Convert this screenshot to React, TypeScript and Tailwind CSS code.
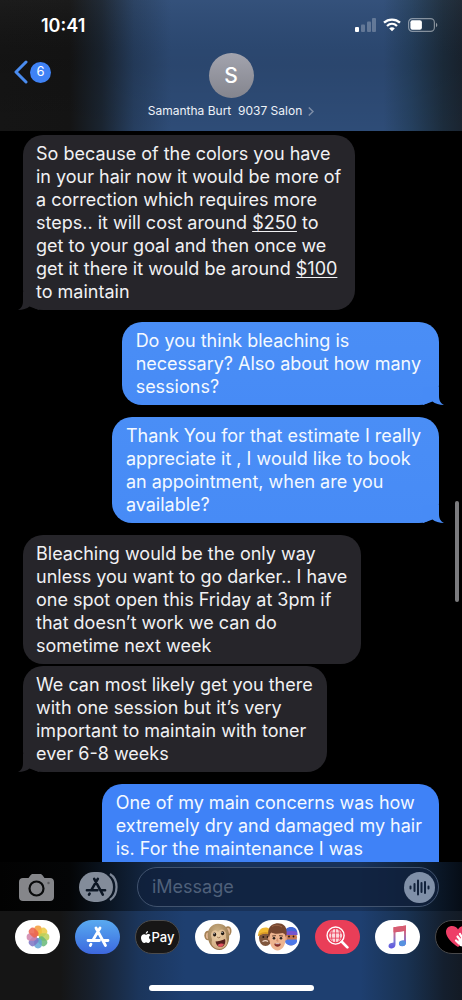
import React from "react";

function Tail({ side }: { side: "left" | "right" }) {
  return side === "left" ? (
    <svg className="absolute bottom-0 -left-[6px] h-[18px] w-[22px] text-[#26252a]" viewBox="0 0 22 18" fill="currentColor" aria-hidden="true">
      <path d="M6 0V9C6 13.5 4.5 16 1 18C5.500 18 10 16.500 12.500 14.500L22 18V0Z" />
    </svg>
  ) : (
    <svg className="absolute bottom-0 -right-[6px] h-[18px] w-[22px] text-[#478bf6]" viewBox="0 0 22 18" fill="currentColor" aria-hidden="true">
      <path d="M16 0V9C16 13.500 17.500 16 21 18C16.500 18 12 16.500 9.500 14.500L0 18V0Z" />
    </svg>
  );
}

function Received({ children, tail = false }: { children: React.ReactNode; tail?: boolean }) {
  return (
    <li className="relative self-start rounded-[20px] bg-[#26252a] py-[7px] pr-[14px] pl-[13px] text-[#f1f1f3]">
      {tail && <Tail side="left" />}
      <p className="relative whitespace-nowrap">{children}</p>
    </li>
  );
}

function Sent({ children }: { children: React.ReactNode }) {
  return (
    <li className="relative self-end rounded-[20px] bg-linear-to-b from-[#4a8ef6] to-[#478bf6] py-[7px] pr-[18px] pl-[14px] text-[#f4f9ff]">
      <Tail side="right" />
      <p className="relative whitespace-nowrap">{children}</p>
    </li>
  );
}

function StoreGlyph({ className }: { className: string }) {
  return (
    <svg className={className} viewBox="0 0 24 22" fill="none" stroke="currentColor" strokeWidth="2.8" strokeLinecap="round" aria-hidden="true">
      <path d="M10 2L19.500 19.500M14 2L7.300 13.500M2 14.500H13.500M18 14.500H22M5 18.200L4.300 19.500" />
    </svg>
  );
}

const petals = [
  { a: 0, c: "#f59b38" },
  { a: 45, c: "#edc83f" },
  { a: 90, c: "#b8cf58" },
  { a: 135, c: "#66b978" },
  { a: 180, c: "#62a6d5" },
  { a: 225, c: "#7c74c4" },
  { a: 270, c: "#cf83aa" },
  { a: 315, c: "#eb614b" },
];

function PhotosIcon() {
  return (
    <svg className="h-6 w-6" viewBox="0 0 24 24" aria-hidden="true">
      {petals.map((p) => (
        <rect key={p.a} x="8.200" y="0.600" width="7.600" height="10.400" rx="3.800" fill={p.c} fillOpacity="0.850" transform={`rotate(${p.a} 12 12)`} />
      ))}
      <circle cx="12" cy="12" r="1.100" fill="#fff" />
    </svg>
  );
}

function AppleMark() {
  return (
    <svg className="h-3 w-[10px]" viewBox="0 0 20 24" fill="#fff" aria-hidden="true">
      <path d="M14 0C14.200 3 12 5.500 9.500 5.500C9.200 3 11.500 .400 14 0ZM19 8.300C14.800 10.500 15.500 15.800 19.800 17.500C18.500 21 16.600 23.800 14.600 23.800C12.900 23.800 12.300 22.800 10.300 22.800C8.300 22.800 7.600 23.800 6 23.800C3.200 23.800 0 18.500 0 13.600C0 8.700 3 6.300 6 6.300C7.900 6.300 9.200 7.500 10.500 7.500C11.700 7.500 13.200 6.200 15.400 6.200C16.900 6.200 18.200 7 19 8.300Z" />
    </svg>
  );
}

function MonkeyIcon() {
  return (
    <svg className="h-7 w-7" viewBox="0 0 28 28" aria-hidden="true">
      <defs>
        <radialGradient id="fur" cx=".45" cy=".3" r=".7">
          <stop offset="0" stopColor="#cdb286" />
          <stop offset="1" stopColor="#94734a" />
        </radialGradient>
        <radialGradient id="muzzle" cx=".4" cy=".3" r=".8">
          <stop offset="0" stopColor="#ecd0a8" />
          <stop offset="1" stopColor="#cda57c" />
        </radialGradient>
      </defs>
      <ellipse cx="4" cy="12.500" rx="3.700" ry="4.800" fill="#a68255" />
      <ellipse cx="4.200" cy="12.700" rx="2.200" ry="3.200" fill="#e5b997" />
      <ellipse cx="24" cy="8" rx="3.500" ry="4.800" fill="#a68255" />
      <ellipse cx="24" cy="8.300" rx="2" ry="3.200" fill="#e5b997" />
      <path d="M3.800 14C3 6 7.500 1 14 .800C20.500 .800 25 5.500 25.200 12.500C25.500 20.500 21.500 27 15.500 27C9 27 4.500 21 3.800 14Z" fill="url(#fur)" />
      <path d="M7 11C8.500 6.500 12 6.500 14 9C16 5.500 20.500 5.500 22 10C22.500 12.500 21.500 14 22.800 16.500C24.500 21.500 20.500 26 15.500 26C10 26 6.300 21.500 8 17.500C8.200 15 6.500 13.500 7 11Z" fill="url(#muzzle)" />
      <ellipse cx="10.600" cy="11.500" rx="1.600" ry="2" fill="#1f1712" />
      <ellipse cx="18.600" cy="10.300" rx="1.600" ry="2" fill="#1f1712" />
      <circle cx="10.100" cy="10.700" r=".6" fill="#fff" />
      <circle cx="18.100" cy="9.500" r=".6" fill="#fff" />
      <path d="M13.500 14.200L14.500 14.800M16 14L15.500 14.700" stroke="#8a6242" strokeWidth=".9" strokeLinecap="round" />
      <path d="M11.500 18.500C14.500 18.300 18 17.300 21 16C22 19.500 20.500 23.500 17 24C14 24.300 12.200 21.800 11.500 18.500Z" fill="#54201d" />
      <path d="M13.500 22C15 20.400 18.500 20 20 21C19 23 18 24 16.800 24C15.500 24 14.200 23.300 13.500 22Z" fill="#df5360" />
    </svg>
  );
}

function MemojiIcon() {
  return (
    <svg className="h-7 w-[41px]" viewBox="0 0 41 28" aria-hidden="true">
      <ellipse cx="8.500" cy="15" rx="6.500" ry="8" fill="#80573d" />
      <path d="M1.200 13C1 7.500 4 4.500 8.500 4.500C12 4.500 15 6.500 15 12C10 9.500 5 10 1.200 13Z" fill="#f1b932" />
      <path d="M1.200 12.500C5 9.500 10 9 15 11.500" stroke="#d89825" strokeWidth="1.400" fill="none" />
      <circle cx="6.300" cy="14" r="1" fill="#241712" />
      <circle cx="10.700" cy="14" r="1" fill="#241712" />
      <path d="M5.500 18.500C7.500 17.500 9.500 17.500 11 18.500" stroke="#f0d9ca" strokeWidth="1.200" fill="none" />
      <ellipse cx="34" cy="14.500" rx="6" ry="8" fill="#c87950" />
      <path d="M27.500 11C27.500 6 30 4 34 4C38 4 40.500 6.500 40.500 11V12H27.500Z" fill="#4367d8" />
      <path d="M28 9C32 7.500 36 7.500 40 9V12H28Z" fill="#7854cd" />
      <circle cx="32" cy="13.500" r=".9" fill="#201611" />
      <circle cx="36.500" cy="13.500" r=".9" fill="#201611" />
      <path d="M28 16.500H40V19C38 23.500 30 23.500 28 19Z" fill="#4c78e8" />
      <ellipse cx="12.600" cy="15" rx="1.800" ry="2.500" fill="#d99b76" />
      <ellipse cx="28.500" cy="15" rx="1.800" ry="2.500" fill="#d99b76" />
      <path d="M12.500 9H28.500V16C28.500 22.500 25 27.500 20.500 27.500C16 27.500 12.500 22.500 12.500 16Z" fill="#edb48f" />
      <path d="M11.500 14C10.500 7 12 2 18 .700C25 -.800 29.500 3 29.500 8C30 10.500 29.300 12 28.800 14C28.500 11 27 10.500 25.500 10C20 11.500 16 10.500 14.500 9.500C13 10.500 12.500 12 12.200 14Z" fill="#75462f" />
      <path d="M15 3.500C18 1.500 22 2 25 4" stroke="#9d674a" strokeWidth="1" fill="none" />
      <path d="M15.500 13L18.500 12.700M22.500 12.700L25.500 13" stroke="#60402f" strokeWidth="1" strokeLinecap="round" />
      <ellipse cx="17" cy="15.200" rx="1.300" ry="1.200" fill="#2a211e" />
      <ellipse cx="24" cy="15.200" rx="1.300" ry="1.200" fill="#2a211e" />
      <path d="M20.500 15.500L19.800 18H21.500" stroke="#c47d5f" strokeWidth=".8" fill="none" />
      <path d="M17.300 21C18.500 19.700 22.500 19.700 23.700 21C23.500 24.500 17.500 24.500 17.300 21Z" fill="#822d29" />
      <path d="M18.500 20.700H22.500" stroke="#fff" strokeWidth=".8" />
    </svg>
  );
}

function ImageSearchIcon() {
  return (
    <svg className="h-[23px] w-[23px]" viewBox="0 0 24 24" fill="none" stroke="#fff" aria-hidden="true">
      <circle cx="10" cy="10" r="8.900" strokeWidth="1.500" />
      <path d="M16.500 16.500L22.300 22.300" strokeWidth="2.800" strokeLinecap="round" />
      <circle cx="10" cy="10" r="6.800" fill="#fbd8dc" stroke="none" />
      <path d="M3 7.300H17M3 12.700H17M10 3V17M6.800 3C5.400 8 5.400 12 6.800 17M13.200 3C14.600 8 14.600 12 13.200 17" stroke="#e93e58" strokeWidth=".9" />
    </svg>
  );
}

function MusicIcon() {
  return (
    <svg className="h-6 w-5" viewBox="0 0 20 24" aria-hidden="true">
      <defs>
        <linearGradient id="note" x1="0" y1="0" x2="0" y2="1">
          <stop offset="0" stopColor="#e4516a" />
          <stop offset=".35" stopColor="#c66b91" />
          <stop offset=".7" stopColor="#7777d8" />
          <stop offset="1" stopColor="#5d55df" />
        </linearGradient>
      </defs>
      <path d="M5.500 2.200L18 .500V17.500C18 20 16.500 21 14.300 21.200C12 21.300 11 20 11 18.700C11 16.500 13 15.800 16 15.300V6L7.500 7.300V19.300C7.500 22 6 23.200 3.800 23.500C1.700 23.700 .500 22.500 .500 21C.500 18.800 2.500 18 5.500 17.500Z" fill="url(#note)" />
      <ellipse cx="14.400" cy="18.300" rx="3.400" ry="2.800" fill="#5792df" />
      <path d="M5.500 2.200L18 .500V5.700L7.500 7.300H5.500Z" fill="#d65c71" />
    </svg>
  );
}

function HeartIcon() {
  return (
    <svg className="h-6 w-[26px]" viewBox="0 0 26 24" aria-hidden="true">
      <path d="M13 22C7 18 1 12.500 1 7C1 3 4 1 7 1C9.800 1 12 2.500 13 4.500C14 2.500 16.200 1 19 1C22 1 25 3 25 7C25 12.500 19 18 13 22Z" fill="#ee3e67" />
      <g stroke="#fff" strokeWidth="2.200" strokeLinecap="round" fill="none">
        <path d="M15 9L18 14M12.500 11.500L16 16M11 15.500L14 18.500" />
      </g>
      <path d="M13 16L18 11L23 15L20 22L15 21Z" fill="#fff" />
    </svg>
  );
}

const drawerApps = [
  { name: "Photos", tone: "bg-white", icon: <PhotosIcon /> },
  { name: "App Store", tone: "bg-linear-to-b from-[#5aaaf0] to-[#3d67de]", icon: <StoreGlyph className="h-[22px] w-6 text-white" /> },
  {
    name: "Apple Pay",
    tone: "bg-[#171616] border border-[#4b4b4c]",
    icon: (
      <span className="flex items-center gap-px text-[13px] leading-4 font-medium text-white">
        <AppleMark />
        Pay
      </span>
    ),
  },
  { name: "Animoji", tone: "bg-white", icon: <MonkeyIcon /> },
  { name: "Memoji", tone: "bg-white", icon: <MemojiIcon /> },
  { name: "Image search", tone: "bg-[#e93e58]", icon: <ImageSearchIcon /> },
  { name: "Music", tone: "bg-white", icon: <MusicIcon /> },
  { name: "Digital Touch", tone: "bg-black border border-[#48484a]", icon: <HeartIcon /> },
];

export default function App() {
  return (
    <div className="flex h-screen flex-col overflow-hidden bg-black font-['Inter','Liberation_Sans',sans-serif] text-white">
      <header className="shrink-0 bg-[linear-gradient(90deg,#151515_0%,#141414_15%,#1a2430_22%,#263e5f_29%,#2e4c77_37%,#2e4c77_83%,#25405f_89%,#1c2c3c_96%,#1a2430_100%)]">
        <div className="bg-linear-to-b from-white/3 via-black/8 to-transparent pb-3">
          <div className="flex h-[53px] items-end justify-between pr-6 pl-[41px]">
            <time className="pb-[17px] text-[18px] leading-5 font-semibold">10:41</time>
            <div className="flex items-center gap-[7px] pb-[21px]">
              <svg className="h-[14px] w-[21px]" viewBox="0 0 21 14" fill="#fff" aria-label="Signal">
                <rect y="9" width="4" height="5" rx="1" />
                <g opacity=".25">
                  <rect x="6" y="6.500" width="4" height="7.500" rx="1" />
                  <rect x="12" y="3.500" width="4" height="10.500" rx="1" />
                  <rect x="17" width="4" height="14" rx="1" />
                </g>
              </svg>
              <svg className="h-[14px] w-[18px]" viewBox="0 0 18 14" fill="none" stroke="#fff" strokeWidth="2.300" aria-label="Wi-Fi">
                <path d="M1 4.700C5.500 .500 12.500 .500 17 4.700M4 8C7 5.200 11 5.200 14 8" />
                <path d="M6.200 10.400C7.800 9 10.200 9 11.800 10.400L9 13.300Z" fill="#fff" stroke="none" />
              </svg>
              <svg className="h-[14px] w-[30px]" viewBox="0 0 30 14" fill="none" aria-label="Battery">
                <rect x=".6" y=".6" width="25.800" height="12.800" rx="3.800" stroke="#fff" strokeOpacity=".45" strokeWidth="1.200" />
                <rect x="2.400" y="2.300" width="11.500" height="9.400" rx="2" fill="#fff" />
                <path d="M28 4.800C29.800 5.600 29.800 8.400 28 9.200Z" fill="#fff" fillOpacity=".5" />
              </svg>
            </div>
          </div>
          <div className="grid grid-cols-[1fr_auto_1fr]">
            <a href="#messages" aria-label="Back, 6 unread" className="ml-[14px] flex h-[38px] items-center gap-[2px] self-start">
              <svg className="h-6 w-[14px]" viewBox="0 0 14 24" fill="none" stroke="#4a8cf0" strokeWidth="3" strokeLinecap="round" strokeLinejoin="round" aria-hidden="true">
                <path d="M12 2L2 12L12 22" />
              </svg>
              <span className="flex h-[21px] w-[21px] items-center justify-center rounded-full bg-[#3f82f5] text-[13px]">6</span>
            </a>
            <button className="flex flex-col items-center">
              <span className="flex h-[45px] w-[45px] items-center justify-center rounded-full bg-linear-to-b from-[#a3a4ae] to-[#84858e] text-[21px] font-medium">S</span>
              <span className="flex items-center gap-[6px] pt-[5px] text-[12px] leading-4 whitespace-pre text-[#eef2f8]">
                {"Samantha Burt  9037 Salon"}
                <svg className="h-[9px] w-[6px]" viewBox="0 0 6 9" fill="none" stroke="#7d8da7" strokeWidth="1.500" aria-hidden="true">
                  <path d="M.800 .500L5 4.500L.800 8.500" />
                </svg>
              </span>
            </button>
          </div>
        </div>
      </header>

      <main className="relative min-h-0 flex-1 overflow-hidden pt-1">
        <ol id="messages" className="flex flex-col gap-3 px-[23px] text-[18px] leading-[23px]">
          <Received tail>
            So because of the colors you have<br />
            in your hair now it would be more of<br />
            a correction which requires more<br />
            steps.. it will cost around <a href="#amount-250" className="underline decoration-1 underline-offset-2">$250</a> to<br />
            get to your goal and then once we<br />
            get it there it would be around <a href="#amount-100" className="underline decoration-1 underline-offset-2">$100</a><br />
            to maintain
          </Received>
          <Sent>
            Do you think bleaching is<br />
            necessary? Also about how many<br />
            sessions?
          </Sent>
          <Sent>
            Thank You for that estimate I really<br />
            appreciate it , I would like to book<br />
            an appointment, when are you<br />
            available?
          </Sent>
          <li>
            <ol className="flex flex-col gap-[2px]">
              <Received>
                Bleaching would be the only way<br />
                unless you want to go darker.. I have<br />
                one spot open this Friday at 3pm if<br />
                that doesn’t work we can do<br />
                sometime next week
              </Received>
              <Received tail>
                We can most likely get you there<br />
                with one session but it’s very<br />
                important to maintain with toner<br />
                ever 6-8 weeks
              </Received>
            </ol>
          </li>
          <li className="self-end rounded-t-[20px] bg-[#3f82f7] pt-[7px] pr-[17px] pb-6 pl-[14px] whitespace-nowrap text-[#f4f9ff]">
            One of my main concerns was how<br />
            extremely dry and damaged my hair<br />
            is. For the maintenance I was
          </li>
        </ol>
        <div className="absolute top-[370px] right-[3px] h-[101px] w-1 rounded-full bg-[#7b7b7e]" />
      </main>

      <footer className="shrink-0">
        <div className="flex items-center bg-[linear-gradient(90deg,#020202_0%,#040506_15%,#0b1624_24%,#152a49_34%,#18325a_50%,#18325a_78%,#0f2138_90%,#060d16_100%)] pt-[5px] pr-[23px] pb-1 pl-[19px]">
          <button aria-label="Camera" className="mr-[25px] text-[#85868a]">
            <svg className="h-[27px] w-[35px]" viewBox="0 0 35 27" aria-hidden="true">
              <path d="M4 4H9.500L11.500 1.300C12.200 .400 13 0 14 0H21C22 0 22.800 .400 23.500 1.300L25.500 4H31C33.500 4 35 5.500 35 8V23C35 25.500 33.500 27 31 27H4C1.500 27 0 25.500 0 23V8C0 5.500 1.500 4 4 4Z" fill="currentColor" />
              <circle cx="17.500" cy="14.500" r="7" fill="none" stroke="#090a0b" strokeWidth="2.200" />
              <circle cx="29.500" cy="9" r="1.200" fill="#5a5b5e" />
            </svg>
          </button>
          <button aria-label="Apps" className="mr-[19px] flex">
            <span className="flex h-[30px] w-[34px] items-center justify-center rounded-full bg-[#838c9a]">
              <StoreGlyph className="h-5 w-[22px] text-[#0c1624]" />
            </span>
            <svg className="h-[30px] w-[5px] overflow-visible" viewBox="0 0 5 30" fill="none" stroke="#7d8797" strokeWidth="2.200" aria-hidden="true">
              <path d="M-3 2C5.700 7.500 5.700 22.500 -3 28" />
            </svg>
          </button>
          <div className="flex h-10 min-w-0 flex-1 items-center rounded-full border border-[#41536e] bg-[#10213c]/80 pr-[3px] pl-[14px]">
            <input aria-label="iMessage" placeholder="iMessage" className="min-w-0 flex-1 bg-transparent text-[18px] leading-6 text-white outline-none placeholder:text-[#4f607a]" />
            <button aria-label="Record audio" className="flex h-[31px] w-[31px] items-center justify-center rounded-full bg-[#8090a8]">
              <svg className="h-[17px] w-[21px]" viewBox="0 0 21 17" fill="none" stroke="#12223b" strokeWidth="2" strokeLinecap="round" aria-hidden="true">
                <path d="M1.500 7.500V9.500M5.500 5V12M9 1.500V15.500M12.500 4V13M16 3V14M19.500 7.500V9.500" />
              </svg>
            </button>
          </div>
        </div>
        <div className="bg-[linear-gradient(90deg,#151515_0%,#151515_13%,#17202d_20%,#1b355b_30%,#1e3f70_40%,#1e3f70_78%,#193252_88%,#141f2e_96%,#131a24_100%)] pt-[9px] pb-[9px]">
          <nav aria-label="Message apps" className="flex gap-[15px] overflow-hidden pl-[15px]">
            {drawerApps.map((app) => (
              <button key={app.name} aria-label={app.name} className={`flex h-[34px] w-[45px] shrink-0 items-center justify-center overflow-hidden rounded-full ${app.tone}`}>
                {app.icon}
              </button>
            ))}
          </nav>
          <div className="mx-auto mt-[31px] h-[6px] w-[165px] rounded-full bg-white" />
        </div>
      </footer>
    </div>
  );
}
